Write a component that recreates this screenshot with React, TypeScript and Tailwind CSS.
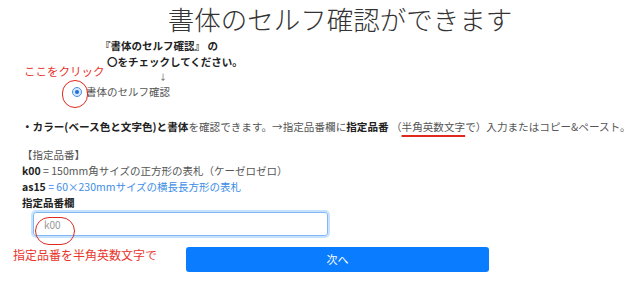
import React from 'react';

const App: React.FC = () => {
  return (
    <div
      className="relative w-[640px] h-[294px] overflow-hidden bg-white text-[#444]"
      style={{ fontFamily: '"Noto Sans CJK JP", "Noto Sans", sans-serif' }}
    >
      {/* Title */}
      <h1 className="h-[38px] pl-[40px] text-center text-[26.5px] leading-[38px] font-light text-[#333]">
        書体のセルフ確認ができます
      </h1>

      {/* Instructions */}
      <div className="pl-[100px] text-[10.5px] leading-[16px] font-bold text-[#222]">
        <p>『書体のセルフ確認』 の</p>
        <p className="pl-[7px]">〇をチェックしてください。</p>
      </div>
      <div className="pl-[159px] h-[14px] text-[8px] leading-[14px] text-[#555]">↓</div>

      {/* Radio */}
      <label className="flex items-center h-[16px] pl-[72px] gap-[4px] text-[10.5px] text-[#555]">
        <span className="w-[10px] h-[10px] rounded-full border border-[#4a90e2] bg-[#d6e8fc] flex items-center justify-center">
          <span className="w-[4px] h-[4px] rounded-full bg-[#1a6fd6]"></span>
        </span>
        <span>書体のセルフ確認</span>
      </label>

      {/* Description */}
      <p className="mt-[19px] pl-[22px] text-[10.6px] leading-[16px] whitespace-nowrap text-[#555]">
        <span className="font-bold text-[#222]">・カラー(ベース色と文字色)と書体</span>
        を確認できます。→指定品番欄に
        <span className="font-bold text-[#222]">指定品番</span>
        {' '}（<span className="underline decoration-[#e0281c] decoration-[2px] underline-offset-[4px]">半角英数文字</span>で）入力またはコピー&ペースト。
      </p>

      {/* Product codes */}
      <div className="mt-[12px] pl-[22px] text-[10.5px] leading-[16px] text-[#555]">
        <p>【指定品番】</p>
        <p>
          <span className="font-bold text-[#222]">k00</span> = 150mm角サイズの正方形の表札（ケーゼロゼロ）
        </p>
        <p>
          <span className="font-bold text-[#222]">as15</span>
          <span className="text-[#3d8de6]"> = 60×230mmサイズの横長長方形の表札</span>
        </p>
        <p className="font-bold text-[#222]">指定品番欄</p>
      </div>

      {/* Input */}
      <div className="mt-[1px] ml-[33px] w-[295px] h-[24px] rounded-[3px] border border-[#80b8f4] shadow-[0_0_0_2px_rgba(0,123,255,0.22)] flex items-center pl-[10px] text-[10px] text-[#999]">
        k00
      </div>

      {/* Next button */}
      <button className="mt-[11px] ml-[186px] w-[303px] h-[25px] rounded-[3px] bg-[#0a7cff] text-white text-[11px] flex items-center justify-center">
        次へ
      </button>

      {/* Red annotations */}
      <span className="absolute left-[24px] top-[63px] text-[11.5px] leading-[16px] text-[#e8352b]">ここをクリック</span>
      <span className="absolute left-[62px] top-[80px] w-[26px] h-[28px] rounded-full border-[1.5px] border-[#e0281c]"></span>
      <span className="absolute left-[35px] top-[217px] w-[40px] h-[28px] rounded-full border-[1.5px] border-[#e0281c]"></span>
      <span className="absolute left-[13px] top-[247px] text-[12px] leading-[16px] text-[#e8352b]">指定品番を半角英数文字で</span>
    </div>
  );
};

export default App;
